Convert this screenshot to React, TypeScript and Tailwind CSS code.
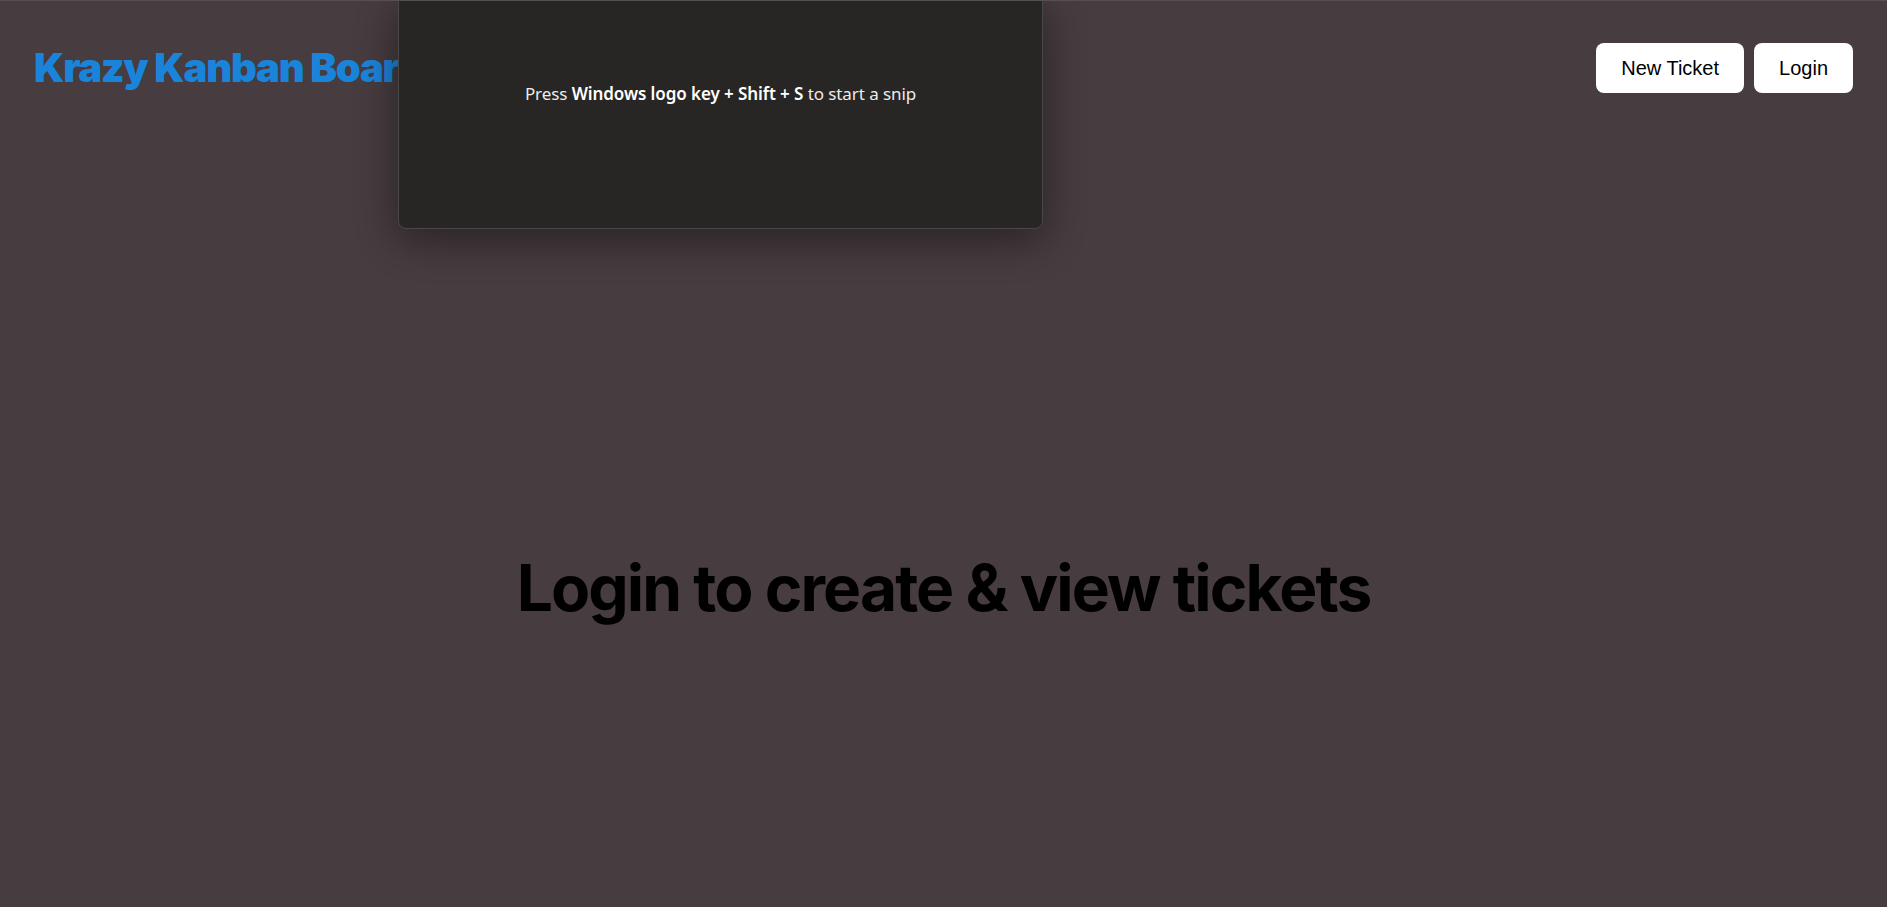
import React from "react";

/**
 * 칸반 로그인 안내 화면 + 캡처 도구 안내 팝업
 */
function Header() {
  return (
    <header className="flex h-[133px] items-center justify-between px-[34px]">
      <h1 className="font-['Inter',sans-serif] text-[40px] font-black tracking-[-0.03em] text-[#1a84db]">
        Krazy Kanban Board
      </h1>
      <nav className="flex items-center gap-[10px] font-['Liberation_Sans',Arial,sans-serif] text-[20px] text-black">
        <button className="h-[50px] rounded-[8px] bg-white px-[25px]">New Ticket</button>
        <button className="h-[50px] rounded-[8px] bg-white px-[25px]">Login</button>
      </nav>
    </header>
  );
}

function SnipHint() {
  return (
    <div className="absolute left-[398px] top-[-1px] flex h-[229px] w-[645px] justify-center rounded-b-[8px] border border-[#4a4846] bg-[#282624] pt-[80px] shadow-[0_10px_40px_rgba(0,0,0,0.45)]">
      <p className="font-['Noto_Sans',sans-serif] text-[17px] tracking-[-0.005em] text-[#ececec]">
        Press <b className="font-semibold text-white">Windows logo key + Shift + S</b> to start a snip
      </p>
    </div>
  );
}

export default function App() {
  return (
    <div className="relative min-h-[907px] overflow-hidden border-t border-[#555052] bg-[#473c40]">
      <Header />
      <main className="mt-[406px] text-center">
        <h2 className="font-['Inter',sans-serif] text-[64px] font-bold tracking-[-0.03em] text-black">
          Login to create &amp; view tickets
        </h2>
      </main>
      <SnipHint />
    </div>
  );
}
